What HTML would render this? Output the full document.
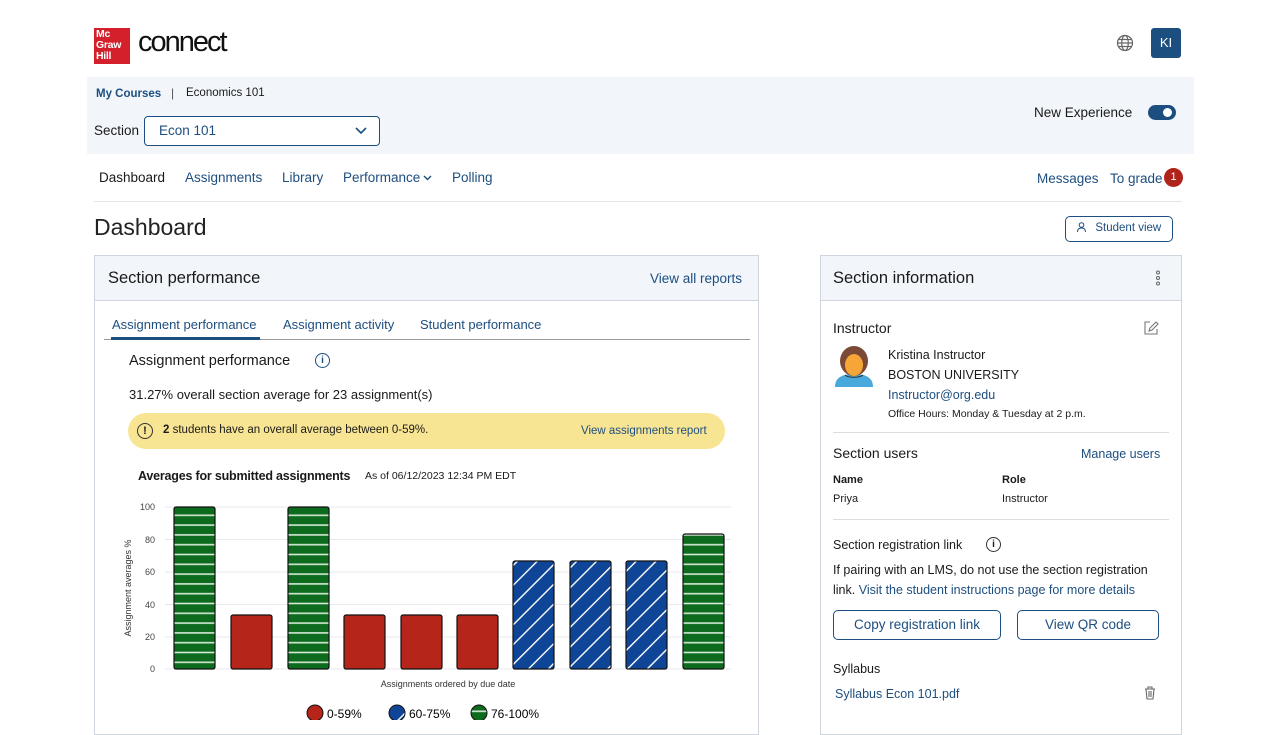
<!DOCTYPE html>
<html><head><meta charset="utf-8"><style>
*{box-sizing:border-box;margin:0;padding:0}
body{width:1280px;height:720px;overflow:hidden;background:#fff;font-family:"Liberation Sans",sans-serif;color:#1a1a1a;position:relative}
.a{position:absolute;white-space:nowrap}
.blue{color:#1d4e80}
.btn{position:absolute;border:1.5px solid #1d4e80;border-radius:5px;color:#1d4e80;font-size:13.5px;text-align:center}
</style></head><body>
<!-- logo -->
<div class="a" style="left:94px;top:28px;width:36px;height:36px;background:#d3202a;color:#fff;font-size:10.5px;font-weight:bold;line-height:11px;padding:1px 2px;letter-spacing:-0.3px">Mc<br>Graw<br>Hill</div>
<div class="a" style="left:138px;top:26px;font-size:29px;letter-spacing:-2px;color:#111">connect</div>
<!-- globe -->
<svg class="a" style="left:1116px;top:34px" width="18" height="18" viewBox="0 0 18 18" fill="none" stroke="#666" stroke-width="1.2"><circle cx="9" cy="9" r="7.5"/><ellipse cx="9" cy="9" rx="3.3" ry="7.5"/><path d="M1.5 9h15M2.5 5.5h13M2.5 12.5h13"/></svg>
<div class="a" style="left:1151px;top:28px;width:30px;height:30px;background:#1d4e80;color:#fff;border-radius:3px;font-size:13px;text-align:center;line-height:30px">KI</div>
<!-- header band -->
<div class="a" style="left:87px;top:77px;width:1107px;height:77px;background:#f2f6fb"></div>
<div class="a blue" style="left:96px;top:88px;font-size:11.5px;font-weight:bold">My Courses</div>
<div class="a" style="left:171px;top:86px;font-size:12px;color:#555">|</div>
<div class="a" style="left:186px;top:87px;font-size:11.5px">Economics 101</div>
<div class="a" style="left:94px;top:123px;font-size:13.5px">Section</div>
<div class="a" style="left:144px;top:116px;width:236px;height:30px;border:1px solid #1d4e80;border-radius:4px;background:#fff"></div>
<div class="a blue" style="left:159px;top:123px;font-size:13.5px">Econ 101</div>
<svg class="a" style="left:355px;top:127px" width="12" height="8"><path d="M1 1l5 5 5-5" stroke="#1d4e80" stroke-width="1.6" fill="none"/></svg>
<div class="a" style="left:1034px;top:105px;font-size:13.5px">New Experience</div>
<div class="a" style="left:1148px;top:105px;width:28px;height:15px;background:#1d4e80;border-radius:8px"></div>
<div class="a" style="left:1163px;top:108px;width:9px;height:9px;background:#fff;border-radius:50%"></div>
<!-- nav -->
<div class="a" style="left:99px;top:170px;font-size:13.5px">Dashboard</div>
<div class="a blue" style="left:185px;top:170px;font-size:13.5px">Assignments</div>
<div class="a blue" style="left:282px;top:170px;font-size:13.5px">Library</div>
<div class="a blue" style="left:343px;top:170px;font-size:13.5px">Performance</div>
<svg class="a" style="left:423px;top:175px" width="9" height="6"><path d="M1 1l3.5 3.5L8 1" stroke="#1d4e80" stroke-width="1.4" fill="none"/></svg>
<div class="a blue" style="left:452px;top:170px;font-size:13.5px">Polling</div>
<div class="a blue" style="left:1037px;top:171px;font-size:13.5px">Messages</div>
<div class="a blue" style="left:1110px;top:171px;font-size:13.5px">To grade</div>
<div class="a" style="left:1164px;top:168px;width:19px;height:19px;border-radius:50%;background:#b0231a;color:#fff;font-size:11px;text-align:center;line-height:19px">1</div>
<div class="a" style="left:94px;top:201px;width:1088px;height:1px;background:#e4e4e4"></div>
<div class="a" style="left:94px;top:214px;font-size:23px;color:#222">Dashboard</div>
<div class="btn" style="left:1065px;top:216px;width:108px;height:26px;line-height:23px;font-size:11.5px;border-width:1px"><svg width="9" height="10" style="vertical-align:-1px" fill="none" stroke="#1d4e80" stroke-width="1"><circle cx="4.5" cy="3" r="2.3"/><path d="M0.5 10c0-3 1.8-4 4-4s4 1 4 4"/></svg>&nbsp;&nbsp; Student view</div>
<!-- left card -->
<div class="a" style="left:94px;top:255px;width:665px;height:480px;border:1px solid #cfd6de"></div>
<div class="a" style="left:95px;top:256px;width:663px;height:45px;background:#f2f6fb;border-bottom:1px solid #cfd6de"></div>
<div class="a" style="left:108px;top:269px;font-size:16.5px">Section performance</div>
<div class="a blue" style="left:650px;top:271px;font-size:13.5px">View all reports</div>
<div class="a blue" style="left:112px;top:317px;font-size:13px">Assignment performance</div>
<div class="a blue" style="left:283px;top:317px;font-size:13px">Assignment activity</div>
<div class="a blue" style="left:420px;top:317px;font-size:13px">Student performance</div>
<div class="a" style="left:104px;top:339px;width:646px;height:1px;background:#999"></div>
<div class="a" style="left:111px;top:337px;width:149px;height:3px;background:#1d4e80"></div>
<div class="a" style="left:129px;top:353px;font-size:14.5px">Assignment performance</div>
<div class="a blue" style="left:315px;top:353px;width:15px;height:15px;border:1px solid #1d4e80;border-radius:50%;font-size:10px;text-align:center;line-height:13px;font-weight:bold">i</div>
<div class="a" style="left:129px;top:387px;font-size:13px">31.27% overall section average for 23 assignment(s)</div>
<div class="a" style="left:128px;top:413px;width:597px;height:36px;background:#f8e593;border-radius:18px"></div>
<div class="a" style="left:137px;top:423px;width:16px;height:16px;border:1.3px solid #333;border-radius:50%;font-size:11px;text-align:center;line-height:14px;font-weight:bold">!</div>
<div class="a" style="left:163px;top:424px;font-size:11.5px"><b>2</b> students have an overall average between 0-59%.</div>
<div class="a blue" style="left:581px;top:425px;font-size:11.5px">View assignments report</div>
<div class="a" style="left:138px;top:469px;font-size:12.5px;font-weight:bold;letter-spacing:-0.2px">Averages for submitted assignments</div>
<div class="a" style="left:365px;top:470px;font-size:10.5px">As of 06/12/2023 12:34 PM EDT</div>
<svg class="a" style="left:110px;top:495px" width="640" height="225" viewBox="110 495 640 225">
<defs>
<pattern id="g" width="10" height="9.8" patternUnits="userSpaceOnUse" y="507"><rect width="10" height="10" fill="#0c6b1c"/><rect y="7.5" width="10" height="1.6" fill="#d8ead8"/></pattern>
<pattern id="b" width="14" height="14" patternUnits="userSpaceOnUse" patternTransform="rotate(45)"><rect width="14" height="14" fill="#0e4597"/><rect x="6" width="1.4" height="14" fill="#fff"/></pattern>
</defs>
<g stroke="#e8e8ee"><path d="M165 507h566M165 539.5h566M165 572h566M165 604.5h566M165 637h566M165 669h566"/></g>
<g font-size="9" fill="#444" text-anchor="end"><text x="155" y="510">100</text><text x="155" y="543">80</text><text x="155" y="575">60</text><text x="155" y="608">40</text><text x="155" y="640">20</text><text x="155" y="672">0</text></g>
<text transform="translate(131 588) rotate(-90)" font-size="9" fill="#333" text-anchor="middle">Assignment averages %</text>
<g stroke="#111" stroke-width="1.2">
<rect x="174" y="507" width="41" height="162" rx="2" fill="url(#g)"/>
<rect x="231" y="615" width="41" height="54" rx="2" fill="#b5251a"/>
<rect x="288" y="507" width="41" height="162" rx="2" fill="url(#g)"/>
<rect x="344" y="615" width="41" height="54" rx="2" fill="#b5251a"/>
<rect x="401" y="615" width="41" height="54" rx="2" fill="#b5251a"/>
<rect x="457" y="615" width="41" height="54" rx="2" fill="#b5251a"/>
<rect x="513" y="561" width="41" height="108" rx="2" fill="url(#b)"/>
<rect x="570" y="561" width="41" height="108" rx="2" fill="url(#b)"/>
<rect x="626" y="561" width="41" height="108" rx="2" fill="url(#b)"/>
<rect x="683" y="534" width="41" height="135" rx="2" fill="url(#g)"/>
</g>
<text x="448" y="687" font-size="9" fill="#333" text-anchor="middle">Assignments ordered by due date</text>
<circle cx="315" cy="713" r="8" fill="#b5251a" stroke="#111"/><text x="327" y="718" font-size="12">0-59%</text>
<circle cx="397" cy="713" r="8" fill="url(#b)" stroke="#111"/><text x="409" y="718" font-size="12">60-75%</text>
<circle cx="479" cy="713" r="8" fill="url(#g)" stroke="#111"/><text x="491" y="718" font-size="12">76-100%</text>
</svg>
<!-- right card -->
<div class="a" style="left:820px;top:255px;width:362px;height:480px;border:1px solid #cfd6de"></div>
<div class="a" style="left:821px;top:256px;width:360px;height:45px;background:#f2f6fb;border-bottom:1px solid #cfd6de"></div>
<div class="a" style="left:833px;top:269px;font-size:16.5px">Section information</div>
<svg class="a" style="left:1155px;top:270px" width="6" height="16" fill="none" stroke="#666" stroke-width="1"><circle cx="3" cy="2.5" r="1.5"/><circle cx="3" cy="8" r="1.5"/><circle cx="3" cy="13.5" r="1.5"/></svg>
<div class="a" style="left:833px;top:320px;font-size:14px">Instructor</div>
<svg class="a" style="left:1144px;top:321px" width="16" height="14" fill="none" stroke="#777" stroke-width="1.1"><path d="M6 1H1v12h12V8M5 10l1-3 6-6 2 2-6 6z"/></svg>
<svg class="a" style="left:833px;top:345px" width="42" height="42" viewBox="0 0 42 42"><path d="M2 42c0-10 8-13 19-13s19 3 19 13z" fill="#4aa9dc"/><ellipse cx="21" cy="16" rx="14" ry="15" fill="#7a4a36"/><ellipse cx="21" cy="20" rx="9" ry="11" fill="#f6a637"/><path d="M12 30c3 3 15 3 18 0" stroke="#333" fill="none"/></svg>
<div class="a" style="left:888px;top:348px;font-size:12.5px">Kristina Instructor</div>
<div class="a" style="left:888px;top:368px;font-size:12.5px">BOSTON UNIVERSITY</div>
<div class="a blue" style="left:888px;top:388px;font-size:12.5px">Instructor@org.edu</div>
<div class="a" style="left:888px;top:408px;font-size:10.5px">Office Hours: Monday &amp; Tuesday at 2 p.m.</div>
<div class="a" style="left:833px;top:432px;width:336px;height:1px;background:#ddd"></div>
<div class="a" style="left:833px;top:445px;font-size:14px">Section users</div>
<div class="a blue" style="left:1081px;top:447px;font-size:12.5px">Manage users</div>
<div class="a" style="left:833px;top:474px;font-size:11px;font-weight:bold">Name</div>
<div class="a" style="left:1002px;top:474px;font-size:11px;font-weight:bold">Role</div>
<div class="a" style="left:833px;top:493px;font-size:11px">Priya</div>
<div class="a" style="left:1002px;top:493px;font-size:11px">Instructor</div>
<div class="a" style="left:833px;top:519px;width:336px;height:1px;background:#ddd"></div>
<div class="a" style="left:833px;top:538px;font-size:12.5px">Section registration link</div>
<div class="a" style="left:986px;top:537px;width:15px;height:15px;border:1px solid #333;border-radius:50%;font-size:10px;text-align:center;line-height:13px;font-weight:bold">i</div>
<div class="a" style="left:833px;top:563px;font-size:12.5px">If pairing with an LMS, do not use the section registration</div>
<div class="a" style="left:833px;top:583px;font-size:12.5px">link. <span class="blue">Visit the student instructions page for more details</span></div>
<div class="btn" style="left:833px;top:610px;width:168px;height:30px;line-height:27px">Copy registration link</div>
<div class="btn" style="left:1017px;top:610px;width:142px;height:30px;line-height:27px">View QR code</div>
<div class="a" style="left:833px;top:662px;font-size:12.5px">Syllabus</div>
<div class="a blue" style="left:835px;top:687px;font-size:12.5px">Syllabus Econ 101.pdf</div>
<svg class="a" style="left:1144px;top:686px" width="12" height="14" fill="none" stroke="#666" stroke-width="1.1"><path d="M1 3h10M4 3V1h4v2M2 3l1 10h6l1-10M5 5v6M7 5v6"/></svg>
</body></html>
